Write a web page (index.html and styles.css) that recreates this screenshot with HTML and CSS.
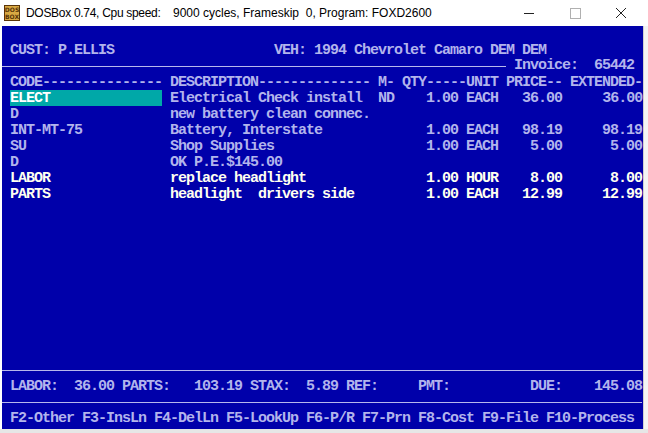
FILE: index.html
```html
<!DOCTYPE html>
<html>
<head>
<meta charset="utf-8">
<title>DOSBox</title>
<link rel="stylesheet" href="styles.css">
</head>
<body>
<div class="window">
  <div class="titlebar">
    <svg class="appicon" width="16" height="16" viewBox="0 0 16 16">
      <rect x="0.5" y="0.5" width="15" height="15" fill="#d9a943" stroke="#5a3508"/>
      <text x="8" y="7" text-anchor="middle" class="icon-text">DOS</text>
      <text x="8" y="14" text-anchor="middle" class="icon-text">BOX</text>
    </svg>
    <div class="title-main"><span class="title">DOSBox 0.74, Cpu speed:</span></div>
    <span class="title">9000 cycles, Frameskip  0, Program: FOXD2600</span>
    <div class="controls">
      <svg class="ctl" width="46" height="26" viewBox="0 0 46 26"><line x1="18" y1="13.5" x2="28" y2="13.5" stroke="#222" stroke-width="1"/></svg>
      <svg class="ctl" width="46" height="26" viewBox="0 0 46 26"><rect x="18.5" y="8.5" width="10" height="10" fill="none" stroke="#b0b0b0" stroke-width="1"/></svg>
      <svg class="ctl" width="46" height="26" viewBox="0 0 46 26"><path d="M18 8 L28 18 M28 8 L18 18" stroke="#222" stroke-width="1"/></svg>
    </div>
  </div>
  <div class="client">
    <div class="screen">
      <div class="row"> </div>
      <div class="row"> CUST: P.ELLIS                    VEH: 1994 Chevrolet Camaro DEM DEM</div>
      <div class="row row-rule"><span class="rule rule-short"></span><span class="txt"> Invoice:  65442</span></div>
      <div class="row"> CODE--------------- DESCRIPTION-------------- M- QTY-----UNIT PRICE-- EXTENDED-</div>
      <div class="row"> <span class="hl">ELECT              </span> Electrical Check install  ND    1.00 EACH   36.00     36.00</div>
      <div class="row"> D                   new battery clean connec.</div>
      <div class="row"> INT-MT-75           Battery, Interstate             1.00 EACH   98.19     98.19</div>
      <div class="row"> SU                  Shop Supplies                   1.00 EACH    5.00      5.00</div>
      <div class="row"> D                   OK P.E.$145.00</div>
      <div class="row bright"> LABOR               replace headlight               1.00 HOUR    8.00      8.00</div>
      <div class="row bright"> PARTS               headlight  drivers side         1.00 EACH   12.99     12.99</div>
      <div class="row"> </div>
      <div class="row"> </div>
      <div class="row"> </div>
      <div class="row"> </div>
      <div class="row"> </div>
      <div class="row"> </div>
      <div class="row"> </div>
      <div class="row"> </div>
      <div class="row"> </div>
      <div class="row"> </div>
      <div class="row row-rule"><span class="rule rule-full"></span></div>
      <div class="row"> LABOR:  36.00 PARTS:   103.19 STAX:  5.89 REF:     PMT:          DUE:    145.08</div>
      <div class="row row-rule"><span class="rule rule-full"></span></div>
      <div class="row"> F2-Other F3-InsLn F4-DelLn F5-LookUp F6-P/R F7-Prn F8-Cost F9-File F10-Process</div>
    </div>
    <div class="behind-right"></div>
  </div>
  <div class="behind-bottom"></div>
</div>
</body>
</html>
```

FILE: styles.css
```css
html, body {
  margin: 0;
  padding: 0;
}
body {
  width: 648px;
  height: 433px;
  overflow: hidden;
  background: #f2f2f2;
}
.window {
  width: 648px;
  height: 433px;
  display: flex;
  flex-direction: column;
  background: #ffffff;
}
.titlebar {
  height: 26px;
  display: flex;
  align-items: center;
  background: #ffffff;
  font-family: "Liberation Sans", Arial, sans-serif;
  font-size: 12px;
  color: #000;
  flex: none;
}
.appicon {
  margin-left: 4px;
  margin-right: 6px;
  flex: none;
}
.icon-text {
  font-family: "DejaVu Sans", sans-serif;
  font-size: 6px;
  font-weight: bold;
  fill: #5a3508;
}
.title {
  white-space: pre;
}
.title-main {
  width: 147px;
  min-width: 147px;
  flex: none;
  letter-spacing: -0.3px;
}
.controls {
  margin-left: auto;
  display: flex;
  margin-right: 4px;
}
.ctl {
  display: block;
}
.client {
  height: 403px;
  display: flex;
  flex: none;
}
.screen {
  margin-left: 2px;
  width: 641px;
  height: 403px;
  background: #0000aa;
  font-family: "Liberation Mono", "DejaVu Sans Mono", monospace;
  font-weight: bold;
  font-size: 15px;
  letter-spacing: -1px;
  line-height: 18px;
  color: #b2b4ec;
  flex: none;
}
.row {
  height: 16px;
  white-space: pre;
}
.row-rule {
  display: flex;
  align-items: center;
}
.rule {
  display: block;
  height: 1px;
  background: #b8b8ec;
  flex: none;
}
.rule-short {
  width: 504px;
}
.rule-full {
  width: 640px;
}
.txt {
  white-space: pre;
}
.hl {
  display: inline-block;
  height: 16px;
  vertical-align: top;
  background: #00a8a8;
  color: #ffffff;
}
.bright {
  color: #fffff0;
}
.behind-right {
  flex: 1;
  background: #f4f4f4;
  border-left: 1px solid #d0d0d0;
}
.behind-bottom {
  flex: 1;
  background: #e6e6e6;
}
```
